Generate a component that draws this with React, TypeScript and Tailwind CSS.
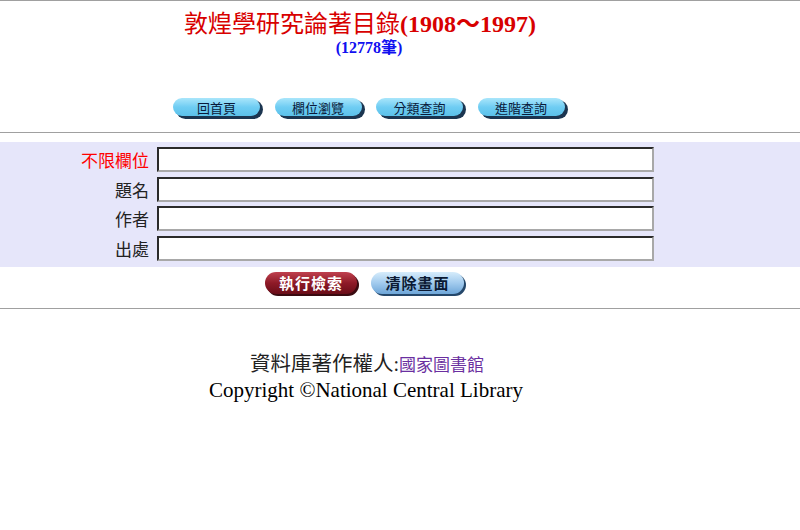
import React from "react";

const serif = '"Liberation Serif", "Noto Sans CJK TC", serif';
const cjk = '"Noto Sans CJK TC", "Liberation Sans", sans-serif';

function NavButton({ label }: { label: string }) {
  return (
    <div className="relative w-[90px] h-[21px]">
      <div className="absolute left-[3px] top-[2px] w-[87px] h-[19px] rounded-full bg-[#1b3550]" />
      <div
        className="absolute left-0 top-0 w-[87px] h-[18px] rounded-full bg-gradient-to-b from-[#a9e6fb] via-[#6fcdf3] to-[#5bc1ea] flex items-center justify-center text-[13px] text-[#0a1a3a] leading-none"
        style={{ fontFamily: cjk }}
      >
        {label}
      </div>
    </div>
  );
}

function Field({ label, red }: { label: string; red?: boolean }) {
  return (
    <div className="flex items-center h-[25px]">
      <div
        className={`w-[149px] text-right text-[17px] leading-none ${red ? "text-[#ff0000]" : "text-[#222]"}`}
        style={{ fontFamily: cjk }}
      >
        {label}
      </div>
      <div className="ml-[8px] w-[497px] h-[25px] bg-white border-2 border-t-[#2a2a2a] border-l-[#2a2a2a] border-b-[#a8a8a8] border-r-[#a8a8a8]" />
    </div>
  );
}

export default function App() {
  return (
    <div className="w-[800px] h-[530px] bg-white overflow-hidden" style={{ fontFamily: serif }}>
      <div className="h-[1px] bg-[#a0a0a0]" />
      <div className="w-[720px] mt-[9px] h-[24px] leading-[24px] text-center text-[24px] text-[#d80000]">
        <span style={{ fontFamily: cjk }} className="font-normal">敦煌學研究論著目錄</span>
        <span className="font-bold">(1908～1997)</span>
      </div>
      <div className="w-[738px] mt-[4px] h-[16px] leading-[16px] text-center text-[16px] font-bold text-[#1010f0]">
        (12778<span style={{ fontFamily: cjk }}>筆</span>)
      </div>
      <div className="mt-[44px] pl-[173px] flex gap-[11.5px] h-[21px]">
        <NavButton label="回首頁" />
        <NavButton label="欄位瀏覽" />
        <NavButton label="分類查詢" />
        <NavButton label="進階查詢" />
      </div>
      <div className="mt-[13px] border-t border-[#a0a0a0]" />
      <div className="mt-[9px] bg-[#e6e6fa] pt-[5px] pb-[6px] flex flex-col gap-[4.5px]">
        <Field label="不限欄位" red />
        <Field label="題名" />
        <Field label="作者" />
        <Field label="出處" />
      </div>
      <div className="mt-[5px] pl-[265px] flex gap-[12px] h-[24px]">
        <div className="relative w-[94px] h-[24px]">
          <div className="absolute left-[2px] top-[2px] w-[92px] h-[22px] rounded-full bg-[#3a0a10]" />
          <div
            className="absolute left-0 top-0 w-[92px] h-[22px] rounded-full bg-gradient-to-b from-[#c0404e] via-[#8e1a28] to-[#6a0d18] flex items-center justify-center text-[15px] font-bold text-white tracking-[1px] leading-none"
            style={{ fontFamily: cjk }}
          >
            執行檢索
          </div>
        </div>
        <div className="relative w-[95px] h-[24px]">
          <div className="absolute left-[2px] top-[2px] w-[93px] h-[22px] rounded-full bg-[#24476a]" />
          <div
            className="absolute left-0 top-0 w-[93px] h-[22px] rounded-full bg-gradient-to-b from-[#d6ecfb] via-[#a2cbee] to-[#6ea6d8] flex items-center justify-center text-[15px] font-bold text-[#0b1a33] tracking-[1px] leading-none"
            style={{ fontFamily: cjk }}
          >
            清除畫面
          </div>
        </div>
      </div>
      <div className="mt-[12px] border-t border-[#a0a0a0]" />
      <div className="w-[734px] mt-[41px] text-center h-[24px] leading-[24px]">
        <span className="text-[20.5px] text-[#222]" style={{ fontFamily: cjk }}>資料庫著作權人</span>
        <span className="text-[20px] text-[#222]">:</span>
        <span className="text-[17px] text-[#6a2fa0]" style={{ fontFamily: cjk }}>國家圖書館</span>
      </div>
      <div className="w-[732px] mt-[4px] text-center text-[21px] leading-[24px] text-black">
        Copyright ©National Central Library
      </div>
    </div>
  );
}
